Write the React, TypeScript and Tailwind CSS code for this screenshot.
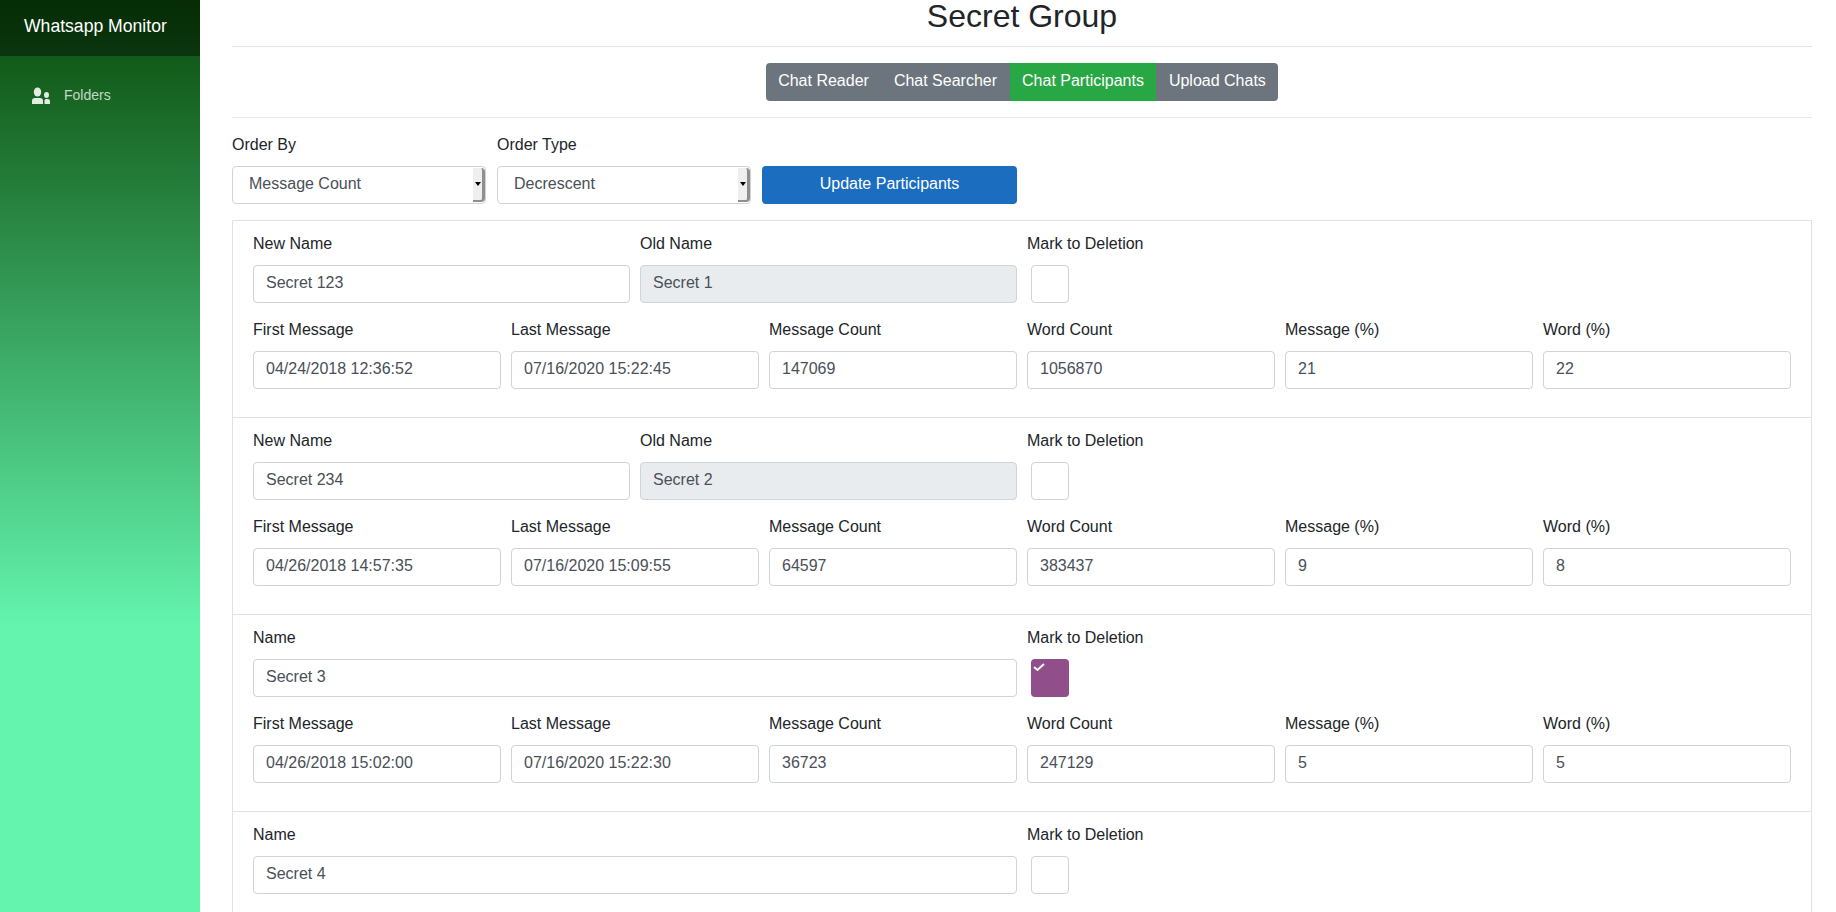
interface Participant {
  newName?: string;
  oldName?: string;
  name?: string;
  marked?: boolean;
  stats?: string[];
}

const statLabels = ['First Message', 'Last Message', 'Message Count', 'Word Count', 'Message (%)', 'Word (%)'];

const participants: Participant[] = [
  { newName: 'Secret 123', oldName: 'Secret 1', stats: ['04/24/2018 12:36:52', '07/16/2020 15:22:45', '147069', '1056870', '21', '22'] },
  { newName: 'Secret 234', oldName: 'Secret 2', stats: ['04/26/2018 14:57:35', '07/16/2020 15:09:55', '64597', '383437', '9', '8'] },
  { name: 'Secret 3', marked: true, stats: ['04/26/2018 15:02:00', '07/16/2020 15:22:30', '36723', '247129', '5', '5'] },
  { name: 'Secret 4' },
];

const Label = ({ children }: { children: string }) => (
  <label className="block h-6 mb-[9px] text-base leading-6 text-[#212529]">{children}</label>
);

const Field = ({ label, value, disabled, span }: { label: string; value: string; disabled?: boolean; span: string }) => (
  <div className={span}>
    <Label>{label}</Label>
    <input
      className={`block w-full h-[38px] rounded border border-[#ced4da] px-3 pb-[2px] text-base text-[#495057] outline-none ${
        disabled ? 'bg-[#e9ecef]' : 'bg-white'
      }`}
      value={value}
      disabled={disabled}
      readOnly
    />
  </div>
);

const SelectBox = ({ label, value }: { label: string; value: string }) => (
  <div className="w-[254px]">
    <Label>{label}</Label>
    <div className="flex h-[38px] items-stretch rounded border border-[#ced4da] bg-white text-base text-[#495057]">
      <span className="flex-1 self-center pl-4 pb-[2px]">{value}</span>
      <span className="my-[1px] flex w-[12px] items-center justify-center rounded-r-sm border-r-[3px] border-b-2 border-[#8f8f8f] bg-[#efefef]">
        <span className="border-x-[3px] border-t-[4px] border-x-transparent border-t-black" />
      </span>
    </div>
  </div>
);

const MarkCheckbox = ({ marked }: { marked?: boolean }) => (
  <div className="col-span-3">
    <Label>Mark to Deletion</Label>
    {marked ? (
      <div className="ml-1 h-[38px] w-[38px] rounded bg-[#904e8b] pl-[2px] pt-[3px]">
        <svg viewBox="0 0 12 10" className="h-[10px] w-[12px]" fill="none" stroke="white" strokeWidth="2">
          <path d="M1 5 L4.5 8 L11 2" />
        </svg>
      </div>
    ) : (
      <div className="ml-1 h-[38px] w-[38px] rounded border border-[#ced4da] bg-white" />
    )}
  </div>
);

const ParticipantRow = ({ item }: { item: Participant }) => (
  <div className="border-b border-[#dee2e6] px-5 pb-7 pt-[11px] last:border-b-0">
    <div className="grid grid-cols-12 gap-x-[10px]">
      {item.name ? (
        <Field label="Name" value={item.name} span="col-span-6" />
      ) : (
        <>
          <Field label="New Name" value={item.newName ?? ''} span="col-span-3" />
          <Field label="Old Name" value={item.oldName ?? ''} span="col-span-3" disabled />
        </>
      )}
      <MarkCheckbox marked={item.marked} />
    </div>
    {item.stats && (
      <div className="mt-[15px] grid grid-cols-12 gap-x-[10px]">
        {item.stats.map((value, i) => (
          <Field key={statLabels[i]} label={statLabels[i]} value={value} span="col-span-2" />
        ))}
      </div>
    )}
  </div>
);

const tabs = ['Chat Reader', 'Chat Searcher', 'Chat Participants', 'Upload Chats'];

export default function App() {
  return (
    <div className="flex h-screen overflow-hidden bg-white font-['Liberation_Sans',Arial,sans-serif]">
      <aside className="w-[200px] shrink-0 bg-[linear-gradient(#0a4b0a,#64f4ae_627px)]">
        <div className="flex h-14 items-center bg-black/40 pb-1 pl-6 text-[17.6px] text-white">Whatsapp Monitor</div>
        <a className="flex items-center pl-8 pt-[29px] text-sm text-white/75">
          {/* two people, drawn since the icon packs' versions are wider */}
          <svg viewBox="0 0 18 17" className="h-[17px] w-[18px]" fill="#e3ebe3">
            <ellipse cx="5.5" cy="5" rx="3.7" ry="4.6" />
            <path d="M0 17 V14 Q0 11 3 11 H8 Q11 11 11 14 V17 Z" />
            <ellipse cx="14.5" cy="8" rx="2.5" ry="3" />
            <path d="M12.5 17 V13.5 Q12.5 12 14 12 H16 Q18 12 18 14 V17 Z" />
          </svg>
          <span className="ml-[14px]">Folders</span>
        </a>
      </aside>

      <main className="flex-1 overflow-hidden pl-8 pr-6">
        <h1 className="h-[46px] text-center text-[32px] leading-[32px] text-[#212529]">Secret Group</h1>
        <div className="border-t border-[#e5e5e5]" />
        <div className="flex justify-center pt-4 pb-4">
          <div className="flex h-[38px] overflow-hidden rounded">
            {tabs.map((tab) => (
              <button
                key={tab}
                className={`px-[12.5px] pb-[2px] text-base text-white ${tab === 'Chat Participants' ? 'bg-[#28a745]' : 'bg-[#6c757d]'}`}
              >
                {tab}
              </button>
            ))}
          </div>
        </div>
        <div className="border-t border-[#e5e5e5]" />

        <div className="flex items-end gap-[11px] pt-[15px]">
          <SelectBox label="Order By" value="Message Count" />
          <SelectBox label="Order Type" value="Decrescent" />
          <button className="h-[38px] w-[255px] rounded bg-[#1a6dbf] pb-[2px] text-base text-white">Update Participants</button>
        </div>

        <div className="mt-4 border border-[#dee2e6]">
          {participants.map((item, i) => (
            <ParticipantRow key={i} item={item} />
          ))}
        </div>
      </main>
    </div>
  );
}
